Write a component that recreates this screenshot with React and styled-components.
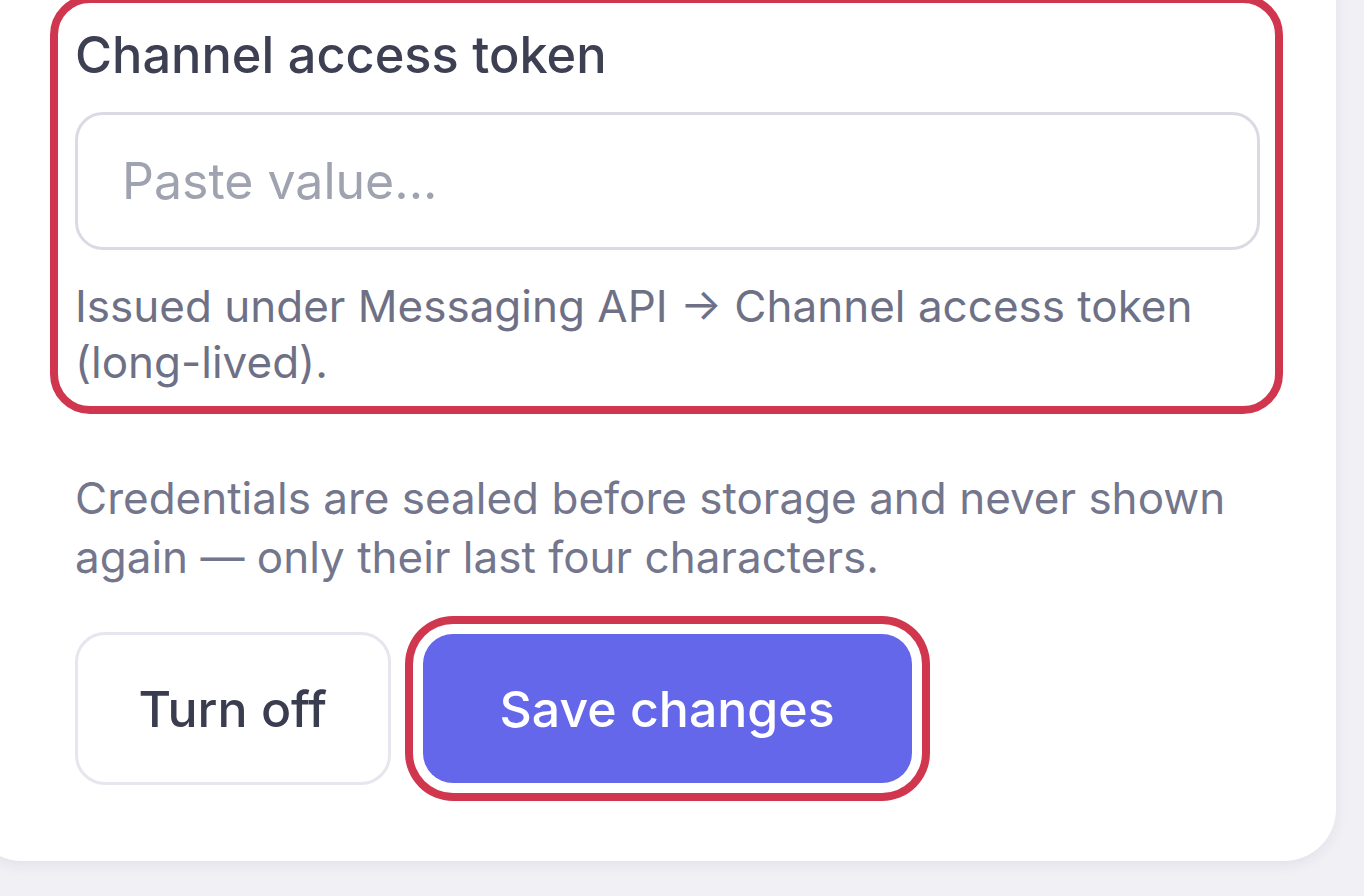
import React from "react";
import styled, { createGlobalStyle } from "styled-components";

const GlobalStyle = createGlobalStyle`
  html, body {
    margin: 0;
    padding: 0;
    background: #f0f0f5;
    overflow: hidden;
  }
  body {
    font-family: Inter, "Noto Sans", "Liberation Sans", sans-serif;
    -webkit-font-smoothing: antialiased;
  }
`;

const Page = styled.div`
  width: 1364px;
  height: 896px;
  overflow: hidden;
`;

const Card = styled.div`
  box-sizing: border-box;
  margin: -60px 0 0 -30px;
  width: 1366px;
  padding: 55px 76px 76px 105px;
  background: #ffffff;
  border-radius: 52px;
  box-shadow: 0 4px 14px rgba(40, 40, 80, 0.07);
  display: flex;
  flex-direction: column;
`;

const Highlight = styled.div`
  box-sizing: border-box;
  margin: 0 -23px 0 -25px;
  border: 8px solid #d1364f;
  border-radius: 40px;
  padding: 24px 15px 16px 17px;
  display: flex;
  flex-direction: column;
`;

const Label = styled.label`
  font-size: 50.5px;
  line-height: 56px;
  font-weight: 500;
  color: #3d3f52;
`;

const Input = styled.input`
  box-sizing: border-box;
  margin-top: 29px;
  height: 138px;
  width: 100%;
  border: 3px solid #dadae4;
  border-radius: 28px;
  padding: 0 44px;
  font-family: inherit;
  font-size: 50px;
  color: #3d3f52;
  background: #fff;
  outline: none;
  &::placeholder {
    color: #9fa3b0;
  }
`;

const Hint = styled.p`
  margin: 28px 0 0;
  font-size: 44px;
  line-height: 56px;
  color: #6e7186;
`;

const Note = styled.p`
  margin: 55px 0 0;
  font-size: 44px;
  line-height: 59px;
  color: #73768c;
`;

const Actions = styled.div`
  margin-top: 45px;
  display: flex;
  gap: 32px;
  align-items: center;
`;

const Button = styled.button`
  box-sizing: border-box;
  height: ${({ primary }) => (primary ? "149px" : "153px")};
  padding: 0 ${({ primary }) => (primary ? "77px" : "60.5px")};
  border-radius: 30px;
  font-family: inherit;
  font-size: 50px;
  font-weight: 500;
  cursor: pointer;
  border: ${({ primary }) => (primary ? "none" : "3px solid #e6e6ee")};
  background: ${({ primary }) => (primary ? "#6467ea" : "#ffffff")};
  color: ${({ primary }) => (primary ? "#ffffff" : "#3a3c4f")};
  box-shadow: ${({ ringed }) =>
    ringed ? "0 0 0 10px #ffffff, 0 0 0 18px #d1364f" : "none"};
`;

export default function App() {
  return (
    <Page>
      <GlobalStyle />
      <Card>
        <Highlight>
          <Label htmlFor="token">Channel access token</Label>
          <Input id="token" placeholder="Paste value..." />
          <Hint>
            Issued under Messaging API → Channel access token (long-lived).
          </Hint>
        </Highlight>
        <Note>
          Credentials are sealed before storage and never shown again — only
          their last four characters.
        </Note>
        <Actions>
          <Button>Turn off</Button>
          <Button primary ringed>
            Save changes
          </Button>
        </Actions>
      </Card>
    </Page>
  );
}
